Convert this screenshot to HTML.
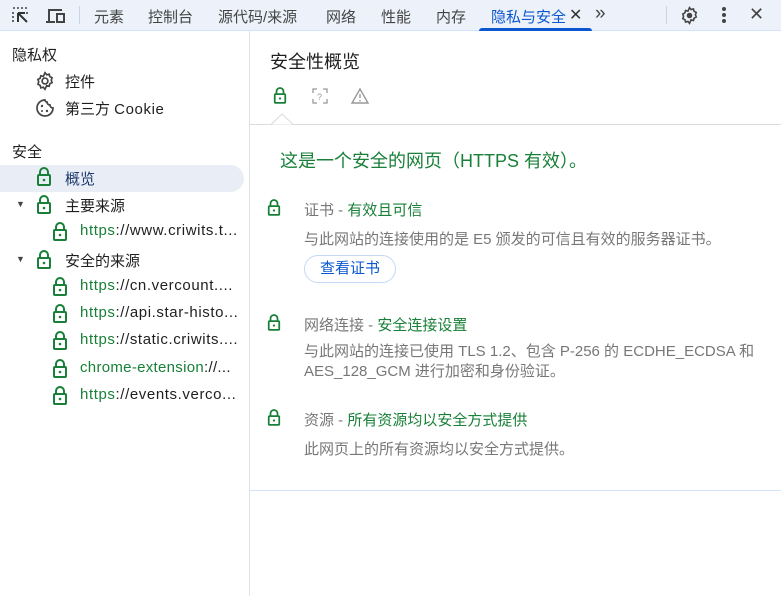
<!DOCTYPE html>
<html><head><meta charset="utf-8"><style>
*{margin:0;padding:0;box-sizing:border-box}
body{width:781px;height:596px;overflow:hidden;background:#fff;font-family:"Liberation Sans","Noto Sans CJK SC",sans-serif;font-size:15px;color:#1f1f1f;position:relative}
.top{position:absolute;left:0;top:0;width:781px;height:31px;background:#edf2fa;border-bottom:1px solid #d3e3fd}
.t{position:absolute;top:6px;font-size:15px;color:#444}
.side{position:absolute;left:0;top:31px;width:250px;height:565px;border-right:1px solid #dfe3e8}
.a{position:absolute;white-space:nowrap}
.u{letter-spacing:0.6px}
.g{color:#188038}
.gr{color:#777}
svg{position:absolute}
</style></head><body>
<div class="top">
<svg style="left:11px;top:6px" width="20" height="20" viewBox="0 0 20 20"><path d="M2 2h2M6 2h2M10 2h2M14 2h2M2 6v2M2 10v2M2 14v2M16 6v2" stroke="#444" stroke-width="1.6"/><path d="M7 7v9M7 7h7M7 7l9 9" stroke="#333" stroke-width="2" fill="none"/></svg>
<svg style="left:45px;top:6px" width="22" height="20" viewBox="0 0 22 20"><path d="M4 15V4h13" stroke="#444" stroke-width="2" fill="none"/><path d="M1 16h9" stroke="#444" stroke-width="2"/><rect x="12" y="8" width="7" height="8" fill="none" stroke="#444" stroke-width="2"/></svg>
<div style="position:absolute;left:79px;top:6px;width:1px;height:18px;background:#c8d4e8"></div>
<span class="t" style="left:94px">元素</span>
<span class="t" style="left:148px">控制台</span>
<span class="t" style="left:218px">源代码/来源</span>
<span class="t" style="left:326px">网络</span>
<span class="t" style="left:381px">性能</span>
<span class="t" style="left:436px">内存</span>
<span class="t" style="left:491px;color:#0b57d0">隐私与安全</span>
<span class="t" style="left:569px;color:#333;font-size:16px;top:5px">✕</span>
<div style="position:absolute;left:479px;top:28px;width:113px;height:3px;background:#0b57d0;border-radius:3px 3px 0 0"></div>
<span class="t" style="left:595px;top:3px;font-size:19px;color:#444">»</span>
<div style="position:absolute;left:666px;top:6px;width:1px;height:18px;background:#c8d4e8"></div>
<svg style="left:680px;top:6px" width="19" height="19" viewBox="0 0 24 24"><path d="M12 2l2 2.5 3-.8.8 3 2.7 1.4-1 2.9 1 2.9-2.7 1.4-.8 3-3-.8L12 22l-2-2.5-3 .8-.8-3-2.7-1.4 1-2.9-1-2.9 2.7-1.4.8-3 3 .8z" fill="none" stroke="#444" stroke-width="2"/><circle cx="12" cy="12" r="3.5" fill="#444"/></svg>
<svg style="left:721px;top:6px" width="6" height="18"><circle cx="3" cy="3" r="2" fill="#444"/><circle cx="3" cy="9" r="2" fill="#444"/><circle cx="3" cy="15" r="2" fill="#444"/></svg>
<span class="t" style="left:749px;top:4px;font-size:18px;color:#444">✕</span>
</div>

<div class="side">
<div class="a" style="left:12px;top:13px">隐私权</div>
<svg style="left:35px;top:40px" width="20" height="20" viewBox="0 0 24 24"><path d="M12 2l2 2.5 3-.8.8 3 2.7 1.4-1 2.9 1 2.9-2.7 1.4-.8 3-3-.8L12 22l-2-2.5-3 .8-.8-3-2.7-1.4 1-2.9-1-2.9 2.7-1.4.8-3 3 .8z" fill="none" stroke="#444" stroke-width="2"/><circle cx="12" cy="12" r="3.5" fill="none" stroke="#444" stroke-width="2"/></svg>
<div class="a" style="left:65px;top:40px">控件</div>
<svg style="left:35px;top:67px" width="20" height="20" viewBox="0 0 20 20"><path d="M10 2a8 8 0 1 0 8 8 3 3 0 0 1-3-3 3 3 0 0 1-3-3 2 2 0 0 1-2-2z" fill="none" stroke="#444" stroke-width="1.7"/><circle cx="7" cy="8" r="1.2" fill="#444"/><circle cx="12" cy="13" r="1.2" fill="#444"/><circle cx="7" cy="13" r="1" fill="#444"/></svg>
<div class="a" style="left:65px;top:67px">第三方 <span class="u">Cookie</span></div>
<div class="a" style="left:12px;top:110px">安全</div>
<div style="position:absolute;left:0;top:134px;width:244px;height:27px;background:#e9eef6;border-radius:0 14px 14px 0"></div>
<div class="a" style="left:65px;top:137px;color:#1f3a6e">概览</div>
<div class="a" style="left:16px;top:168px;font-size:9px;color:#444">▼</div>
<div class="a" style="left:65px;top:164px">主要来源</div>
<div class="a u" style="left:80px;top:191px"><span class="g">https</span>://www.criwits.t...</div>
<div class="a" style="left:16px;top:223px;font-size:9px;color:#444">▼</div>
<div class="a" style="left:65px;top:219px">安全的来源</div>
<div class="a u" style="left:80px;top:246px"><span class="g">https</span>://cn.vercount....</div>
<div class="a u" style="left:80px;top:273px"><span class="g">https</span>://api.star-histo...</div>
<div class="a u" style="left:80px;top:300px"><span class="g">https</span>://static.criwits....</div>
<div class="a u" style="left:80px;top:328px;letter-spacing:0.3px"><span class="g">chrome-extension</span>://...</div>
<div class="a u" style="left:80px;top:355px"><span class="g">https</span>://events.verco...</div>
</div>

<svg width="0" height="0"><defs><symbol id="lk" viewBox="0 0 16 20"><path d="M4 9V6a4 4 0 0 1 8 0v3" fill="none" stroke="#188038" stroke-width="2"/><rect x="2" y="9" width="12" height="10" rx="1" fill="none" stroke="#188038" stroke-width="2"/><circle cx="8" cy="14" r="1.3" fill="#188038"/></symbol></defs></svg>
<svg style="left:36px;top:166px" width="16" height="20"><use href="#lk"/></svg>
<svg style="left:36px;top:194px" width="16" height="20"><use href="#lk"/></svg>
<svg style="left:52px;top:221px" width="16" height="20"><use href="#lk"/></svg>
<svg style="left:36px;top:249px" width="16" height="20"><use href="#lk"/></svg>
<svg style="left:52px;top:276px" width="16" height="20"><use href="#lk"/></svg>
<svg style="left:52px;top:303px" width="16" height="20"><use href="#lk"/></svg>
<svg style="left:52px;top:330px" width="16" height="20"><use href="#lk"/></svg>
<svg style="left:52px;top:358px" width="16" height="20"><use href="#lk"/></svg>
<svg style="left:52px;top:385px" width="16" height="20"><use href="#lk"/></svg>

<div class="a" style="left:270px;top:48px;font-size:18px">安全性概览</div>
<svg style="left:273px;top:86px" width="14" height="18"><use href="#lk"/></svg>
<svg style="left:312px;top:88px" width="16" height="16" viewBox="0 0 16 16"><path d="M1 5V1h4M11 1h4v4M15 11v4h-4M5 15H1v-4" fill="none" stroke="#999" stroke-width="1.3"/><text x="5" y="12" font-size="9" fill="#999" font-family="Liberation Sans">?</text></svg>
<svg style="left:351px;top:88px" width="18" height="16" viewBox="0 0 18 16"><path d="M9 1L17 15H1z" fill="none" stroke="#999" stroke-width="1.4"/><path d="M9 6v4M9 12v1.5" stroke="#999" stroke-width="1.4"/></svg>
<div style="position:absolute;left:250px;top:124px;width:531px;height:1px;background:#dcdcdc"></div>
<svg style="left:271px;top:113px" width="22" height="12"><path d="M0 11.5L11 1l11 10.5" fill="#fff" stroke="#dcdcdc"/></svg>
<div class="a g" style="left:280px;top:147px;font-size:18px">这是一个安全的网页（HTTPS 有效）。</div>

<svg style="left:267px;top:198px" width="14" height="18"><use href="#lk"/></svg>
<div class="a" style="left:304px;top:199px"><span class="gr">证书 - </span><span class="g">有效且可信</span></div>
<div class="a gr" style="left:304px;top:228px">与此网站的连接使用的是 E5 颁发的可信且有效的服务器证书。</div>
<div style="position:absolute;left:304px;top:255px;width:92px;height:28px;border:1px solid #c5d8f5;border-radius:14px;color:#0b57d0;text-align:center;line-height:26px">查看证书</div>

<svg style="left:267px;top:313px" width="14" height="18"><use href="#lk"/></svg>
<div class="a" style="left:304px;top:314px"><span class="gr">网络连接 - </span><span class="g">安全连接设置</span></div>
<div class="a gr" style="left:304px;top:342px;line-height:20px">与此网站的连接已使用 TLS 1.2、包含 P-256 的 ECDHE_ECDSA 和<br>AES_128_GCM 进行加密和身份验证。</div>

<svg style="left:267px;top:408px" width="14" height="18"><use href="#lk"/></svg>
<div class="a" style="left:304px;top:409px"><span class="gr">资源 - </span><span class="g">所有资源均以安全方式提供</span></div>
<div class="a gr" style="left:304px;top:438px">此网页上的所有资源均以安全方式提供。</div>
<div style="position:absolute;left:250px;top:490px;width:531px;height:1px;background:#d3e3fd"></div>
</body></html>
